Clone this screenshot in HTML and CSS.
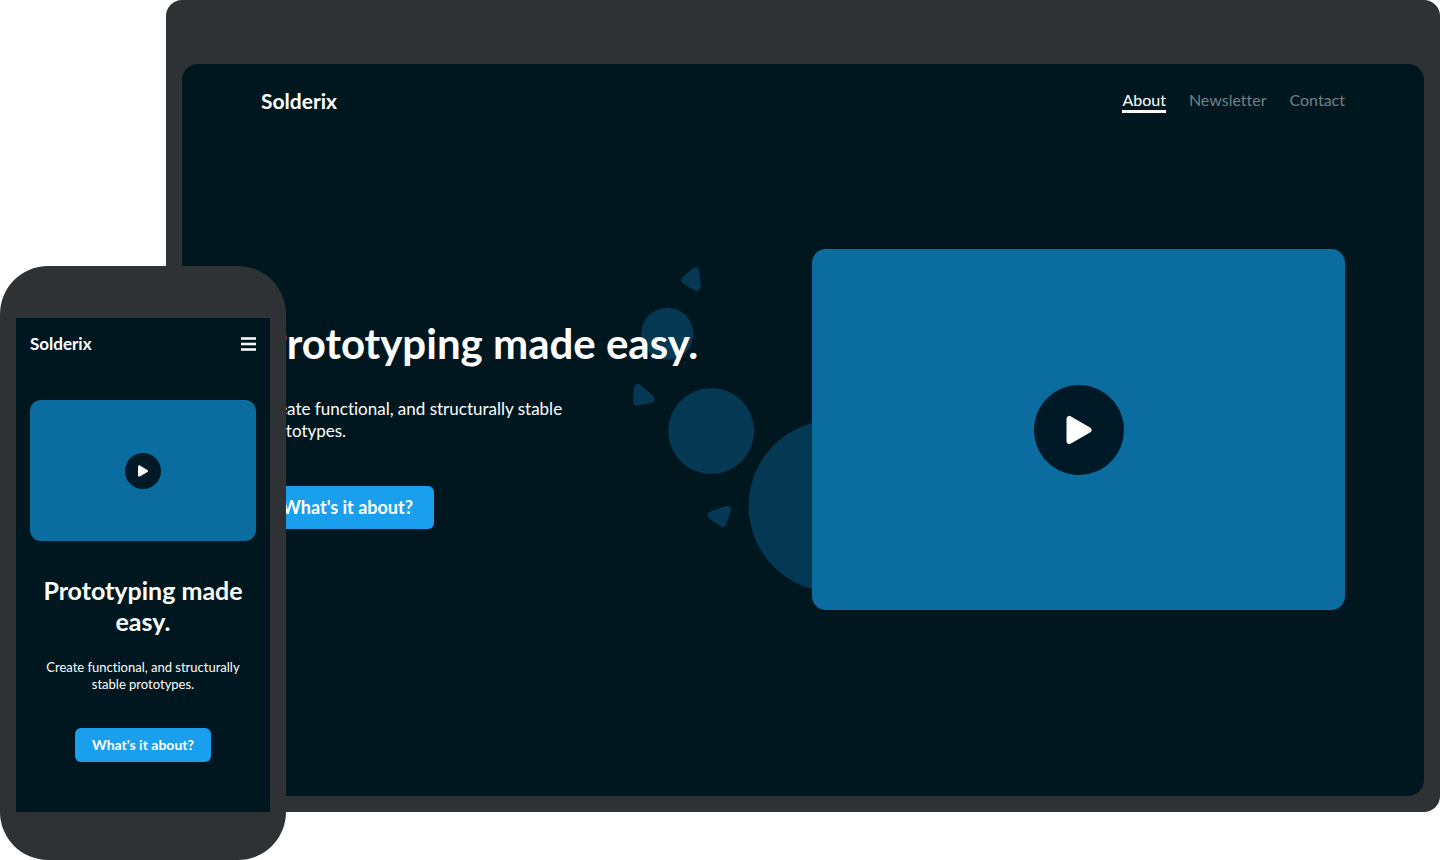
FILE: index.html
```html
<!DOCTYPE html>
<html lang="en">
<head>
<meta charset="utf-8">
<meta name="viewport" content="width=device-width, initial-scale=1">
<title>Solderix</title>
<link rel="stylesheet" href="styles.css">
</head>
<body>
<main class="stage">
  <section class="tablet" aria-label="Desktop preview">
    <div class="screen">
      <header class="header">
        <a class="logo" href="#">Solderix</a>
        <nav class="nav">
          <a class="nav-link nav-link-active" href="#about">About</a>
          <a class="nav-link" href="#newsletter">Newsletter</a>
          <a class="nav-link" href="#contact">Contact</a>
        </nav>
      </header>
      <div class="hero">
        <div class="intro">
          <h1 class="title">Prototyping made easy.</h1>
          <p class="lead">Create functional, and structurally stable prototypes.</p>
          <button class="cta" type="button">What's it about?</button>
        </div>
        <div class="media">
          <svg class="bubbles" viewBox="0 0 290 362" aria-hidden="true">
            <circle cx="35.3" cy="84.7" r="26"/>
            <circle cx="79.2" cy="182" r="43"/>
            <circle cx="202.6" cy="257" r="86"/>
            <path d="M63.3 22.3 53.3 31.2 64.8 38Z"/>
            <path d="M6 139 5 152.5 18.5 149.8Z"/>
            <path d="M95 260.8 79.7 266.3 90.5 273.8Z"/>
          </svg>
          <div class="video">
            <button class="play" type="button" aria-label="Play video">
              <svg class="play-icon" viewBox="0 0 90 90" aria-hidden="true"><path d="M35.5 34V56L54.5 45Z"/></svg>
            </button>
          </div>
        </div>
      </div>
    </div>
  </section>

  <section class="phone" aria-label="Mobile preview">
    <div class="phone-screen">
      <header class="phone-header">
        <a class="logo logo-small" href="#">Solderix</a>
        <button class="menu" type="button" aria-label="Open menu">
          <svg class="menu-icon" viewBox="0 0 15 14" aria-hidden="true"><path d="M0 1.5H15M0 7H15M0 12.5H15"/></svg>
        </button>
      </header>
      <div class="video video-small">
        <button class="play play-small" type="button" aria-label="Play video">
          <svg class="play-icon" viewBox="0 0 90 90" aria-hidden="true"><path d="M35.5 34V56L54.5 45Z"/></svg>
        </button>
      </div>
      <h2 class="title title-small">Prototyping made easy.</h2>
      <p class="lead lead-small">Create functional, and structurally stable prototypes.</p>
      <button class="cta cta-small" type="button">What's it about?</button>
    </div>
  </section>
</main>
</body>
</html>
```
FILE: styles.css
```css
* {
  box-sizing: border-box;
}

body {
  margin: 0;
  background: #fff;
  color: #fff;
  font-family: Lato, "Open Sans", sans-serif;
  font-variant-ligatures: none;
}

button {
  border: 0;
  padding: 0;
  color: inherit;
  font-family: inherit;
  cursor: pointer;
}

a {
  color: inherit;
  text-decoration: none;
}

.stage {
  position: relative;
  display: flex;
  min-height: 100vh;
  padding: 0 0 48px 166px;
}

.tablet {
  display: flex;
  flex: 1;
  padding: 64px 16px 16px;
  border-radius: 16px;
  background: #2e3235;
}

.screen {
  display: flex;
  flex: 1;
  flex-direction: column;
  padding: 0 79px 75px;
  border-radius: 16px;
  background: #001720;
}

.header {
  display: flex;
  align-items: center;
  justify-content: space-between;
  height: 74px;
}

.logo {
  font-size: 21px;
  font-weight: 700;
  line-height: 28px;
}

.nav {
  display: flex;
  gap: 23px;
}

.nav-link {
  border-bottom: 3px solid transparent;
  color: #728087;
  font-size: 16px;
  line-height: 20px;
}

.nav-link-active {
  border-color: #fff;
  color: #fff;
}

.hero {
  display: grid;
  flex: 1;
  grid-template-columns: 1fr 1fr;
  gap: 18px;
  align-items: center;
}

.intro {
  position: relative;
  z-index: 1;
  padding-bottom: 12px;
}

.title {
  margin: 0;
  font-size: 42px;
  font-weight: 700;
  line-height: 50px;
  white-space: nowrap;
}

.lead {
  max-width: 330px;
  margin: 30px 0 44px;
  font-size: 17px;
  line-height: 22px;
}

.cta {
  padding: 10px 21px 11px;
  border-radius: 6px;
  background: #199fee;
  font-size: 18px;
  font-weight: 700;
  line-height: 22px;
}

.media {
  position: relative;
}

/* Decorative shapes spill out from behind the video. */
.bubbles {
  position: absolute;
  top: 0;
  left: -180px;
  width: 290px;
  fill: #053953;
}

.bubbles path {
  stroke: #053953;
  stroke-width: 8;
  stroke-linejoin: round;
}

.video {
  position: relative;
  display: grid;
  place-items: center;
  aspect-ratio: 533 / 361;
  border-radius: 14px;
  background: #0b6ca0;
}

.play {
  width: 90px;
  height: 90px;
  border-radius: 50%;
  background: #001926;
}

.play-icon {
  display: block;
  width: 100%;
}

.play-icon path {
  fill: #fff;
  stroke: #fff;
  stroke-width: 6;
  stroke-linejoin: round;
}

.phone {
  position: absolute;
  bottom: 0;
  left: 0;
  z-index: 2;
  width: 286px;
  padding: 52px 16px 48px;
  border-radius: 48px;
  background: #2e3235;
}

.phone-screen {
  display: flex;
  flex-direction: column;
  padding: 14px 14px 50px;
  background: #001720;
}

.phone-header {
  display: flex;
  align-items: center;
  justify-content: space-between;
  margin-bottom: 44px;
}

.logo-small {
  font-size: 17px;
  line-height: 24px;
}

.menu {
  background: transparent;
}

.menu-icon {
  display: block;
  width: 15px;
  fill: none;
  stroke: #fff;
  stroke-width: 2.6;
}

.video-small {
  aspect-ratio: 226 / 141;
  border-radius: 11px;
}

.play-small {
  width: 36px;
  height: 36px;
}

.title-small {
  margin-top: 34px;
  font-size: 25px;
  line-height: 31px;
  text-align: center;
  white-space: normal;
}

.lead-small {
  align-self: center;
  max-width: 210px;
  margin: 22px 0 35px;
  font-size: 13px;
  line-height: 17px;
  text-align: center;
}

.cta-small {
  align-self: center;
  padding: 8px 17px 9px;
  font-size: 14px;
  line-height: 17px;
}
```
